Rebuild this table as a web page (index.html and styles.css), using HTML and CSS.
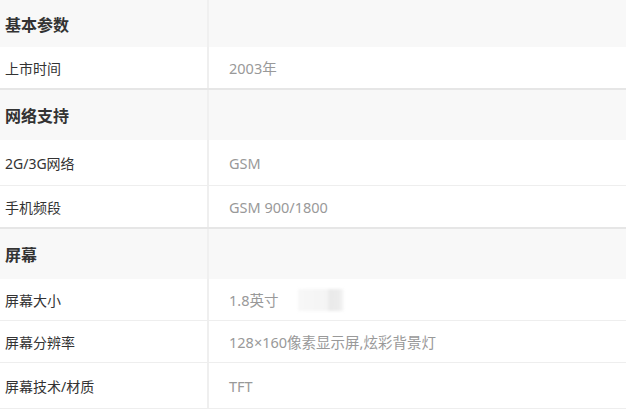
FILE: index.html
```html
<!DOCTYPE html>
<html lang="zh">
<head>
<meta charset="utf-8">
<link rel="stylesheet" href="styles.css">
</head>
<body>
<div class="spec">
  <div class="sec">
    <div class="row head first"><div class="k">基本参数</div><div class="v"></div></div>
    <div class="row"><div class="k">上市时间</div><div class="v">2003年</div></div>
  </div>
  <div class="sec">
    <div class="row head"><div class="k">网络支持</div><div class="v"></div></div>
    <div class="row tall"><div class="k">2G/3G网络</div><div class="v">GSM</div></div>
    <div class="row"><div class="k">手机频段</div><div class="v">GSM 900/1800</div></div>
  </div>
  <div class="sec">
    <div class="row head"><div class="k">屏幕</div><div class="v"></div></div>
    <div class="row"><div class="k">屏幕大小</div><div class="v">1.8英寸<span class="blob"></span></div></div>
    <div class="row"><div class="k">屏幕分辨率</div><div class="v">128×160像素显示屏,炫彩背景灯</div></div>
    <div class="row tall"><div class="k">屏幕技术/材质</div><div class="v">TFT</div></div>
  </div>
</div>
</body>
</html>
```
FILE: styles.css
```css
html, body {
  margin: 0;
  padding: 0;
  background: #ffffff;
}
body {
  font-family: "Noto Sans", "Noto Sans CJK SC", sans-serif;
  font-size: 14px;
  color: #333333;
}
.spec {
  width: 626px;
}
.sec {
  border-bottom: 2px solid #e6e6e6;
}
.sec:last-child {
  border-bottom: 1px solid #eeeeee;
}
.row {
  display: grid;
  grid-template-columns: 209px 1fr;
  height: 41px;
  border-bottom: 1px solid #eeeeee;
}
.row:last-child {
  border-bottom: none;
}
.row.tall {
  height: 45px;
}
.row.head {
  height: 50px;
  background: #f8f8f8;
  border-bottom: none;
}
.row.head.first {
  height: 47px;
}
.k {
  display: flex;
  align-items: center;
  padding-left: 5px;
  border-right: 2px solid #efefef;
  white-space: nowrap;
}
.head .k {
  font-size: 16px;
  font-weight: bold;
  color: #333333;
  border-right-color: #f0f0f0;
}
.v {
  display: flex;
  align-items: center;
  padding-left: 20px;
  font-size: 14.5px;
  color: #999999;
  white-space: nowrap;
}
.blob {
  display: inline-block;
  width: 46px;
  height: 22px;
  margin-left: 20px;
  background: linear-gradient(90deg, #f7f7f7 0%, #f4f4f4 65%, #e9e9e9 67%, #ececec 90%, #fafafa 100%);
  filter: blur(1.5px);
}
```
